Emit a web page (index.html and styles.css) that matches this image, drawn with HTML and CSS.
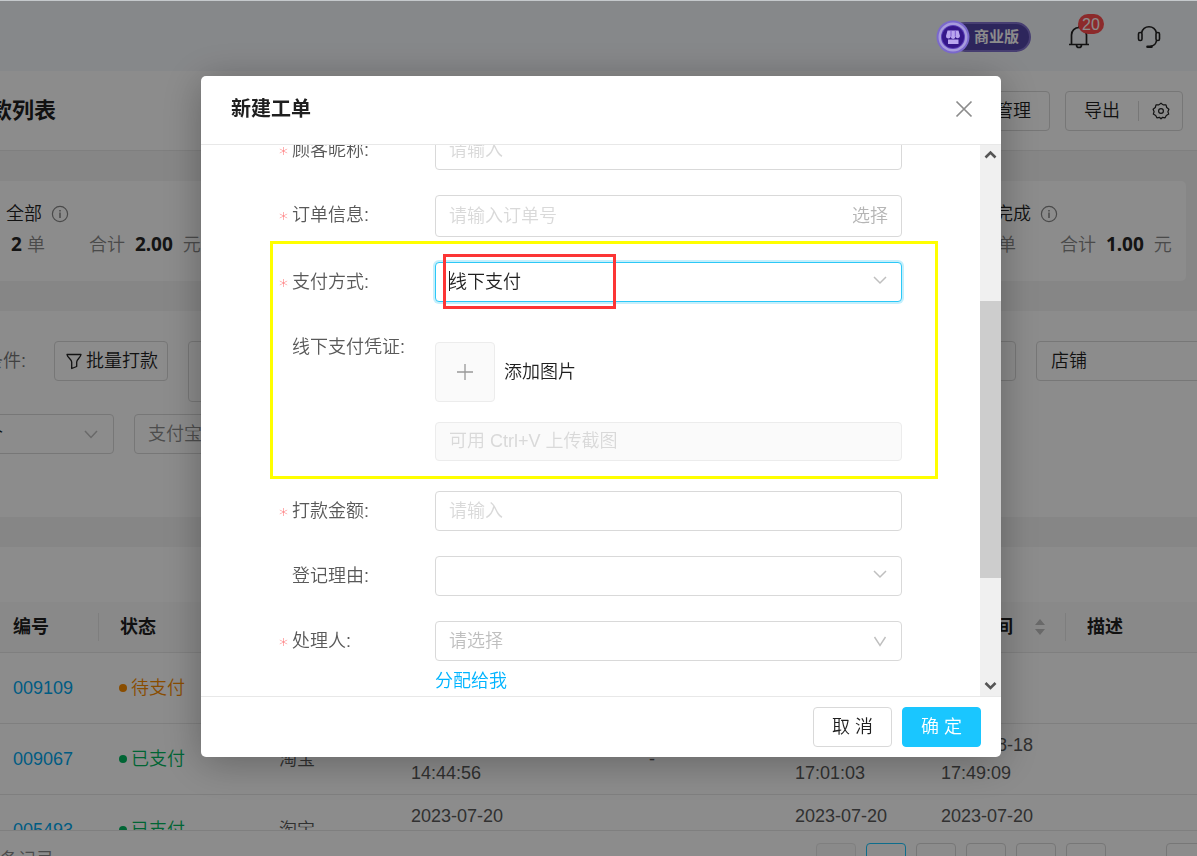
FILE: index.html
```html
<!DOCTYPE html>
<html lang="zh-CN">
<head>
<meta charset="utf-8">
<title>打款列表 - 新建工单</title>
<link rel="stylesheet" href="styles.css">
</head>
<body>
<div class="shell">
  <header class="topbar">
    <a class="edition" href="#">
      <svg class="edition-icon" width="34" height="36" viewBox="0 0 34 36" aria-hidden="true">
        <circle cx="17" cy="18" r="16.500" fill="#7a68cc"/>
        <circle cx="17" cy="18" r="14.500" fill="#a79cdc"/>
        <circle cx="17" cy="18" r="12" fill="#5a3fb8"/>
        <circle cx="17" cy="18" r="11" fill="#35178a"/>
        <path d="M11.500 11.500h11l1.500 5.500a2.300 2.300 0 0 1-4.500 0.500 2.300 2.300 0 0 1-4.800 0 2.300 2.300 0 0 1-4.700-.5z" fill="#b9a6ee"/>
        <path d="M12 20.500h10.500v4.500h-10.500z" fill="#b9a6ee"/>
        <path d="M15 11.500v6M19.300 11.500v6" stroke="#7c5ad0" stroke-width="1"/>
      </svg>
      <span class="edition-text">商业版</span>
    </a>
    <button class="icon-btn bell" aria-label="通知">
      <svg width="24" height="26" viewBox="0 0 24 26" fill="none" stroke="#222" stroke-width="1.700">
        <path d="M2 20.500h20M4.500 20.500V11a7.500 7.500 0 0 1 15 0v9.500M12 3.500V1.500M9.500 21a2.500 2.500 0 0 0 5 0"/>
      </svg>
      <span class="badge">20</span>
    </button>
    <button class="icon-btn" aria-label="客服">
      <svg width="24" height="24" viewBox="0 0 24 24" fill="none" stroke="#222" stroke-width="1.600">
        <path d="M4.500 8C5.500 4 8.500 1.800 12 1.800S18.500 4 19.500 8M19.500 15.500c-.5 3.500-3 5.500-6 5.700"/>
        <rect x="1.500" y="7.500" width="3.500" height="8" rx="1.500"/>
        <rect x="19" y="7.500" width="3.500" height="8" rx="1.500"/>
        <path d="M10.500 21.800h4" stroke-width="2.600" stroke-linecap="round"/>
      </svg>
    </button>
  </header>

  <div class="page-head">
    <h1 class="page-title">款列表</h1>
    <div class="page-actions">
      <button class="btn">工单管理</button>
      <div class="btn-group">
        <button class="btn-plain">导出</button>
        <button class="btn-gear" aria-label="设置">
          <svg width="18" height="18" viewBox="0 0 18 18" fill="none" stroke="#222" stroke-width="1.200">
            <path d="M9 1.200l2.200 1.700 2.800-.1.700 2.700 2.200 1.700L15.900 9.800l.8 2.300-2.400 1.400-1.200 2.300-2.500-.5L9 16.800l-1.600-1.500-2.500.5-1.200-2.300-2.400-1.400.8-2.300-1-2.600 2.200-1.700.7-2.700 2.800.1z" stroke-linejoin="round"/>
            <circle cx="9" cy="9" r="2.400"/>
          </svg>
        </button>
      </div>
    </div>
  </div>

  <section class="stats">
    <div class="stat">
      <div class="stat-title">全部
        <svg width="18" height="18" viewBox="0 0 18 18" fill="none" stroke="#888" stroke-width="1.200"><circle cx="9" cy="9" r="7.600"/><path d="M9 7.500V13M9 5v1.500" stroke-width="1.500"/></svg>
      </div>
      <div class="stat-line"><span class="count"><b>2</b> 单</span><span class="sum">合计 <b>2.00</b> 元</span></div>
    </div>
    <div class="stat">
      <div class="stat-title">已完成
        <svg width="18" height="18" viewBox="0 0 18 18" fill="none" stroke="#888" stroke-width="1.200"><circle cx="9" cy="9" r="7.600"/><path d="M9 7.500V13M9 5v1.500" stroke-width="1.500"/></svg>
      </div>
      <div class="stat-line"><span class="count"><b>1</b> 单</span><span class="sum">合计 <b>1.00</b> 元</span></div>
    </div>
  </section>

  <section class="filters">
    <div class="filter-row">
      <span class="filter-label">条件:</span>
      <button class="btn btn-filter">
        <svg width="16" height="17" viewBox="0 0 16 17" fill="none" stroke="#222" stroke-width="1.300" stroke-linejoin="round"><path d="M1 1.500h14c-.2 3-4.300 4.500-4.300 7.500v4.500L5.700 15.500V9C5.700 6 1.200 4.500 1 1.500z"/></svg>
        批量打款
      </button>
      <div class="box box-tall"></div>
      <div class="box"></div>
      <div class="box box-shop">店铺</div>
    </div>
    <div class="filter-row second">
      <div class="box box-left">
        <span class="cut-text">个</span>
        <svg width="14" height="9" viewBox="0 0 14 9" fill="none" stroke="#bfbfbf" stroke-width="1.500"><path d="M1 1l6 6.500L13 1"/></svg>
      </div>
      <input class="box box-alipay" placeholder="支付宝" aria-label="支付宝">
    </div>
  </section>

  <section class="table-area">
    <table class="orders">
      <colgroup><col class="c-id"><col class="c-state"><col class="c-shop"><col class="c-date"><col class="c-short"><col class="c-date"><col class="c-date"><col class="c-date"><col></colgroup>
      <thead>
        <tr><th>编号</th><th>状态</th><th></th><th></th><th></th><th></th><th></th>
          <th><span class="sort-head">打款时间
            <svg width="12" height="18" viewBox="0 0 12 18" fill="#bfbfbf"><path d="M6 1l5 6H1zM6 17l5-6H1z"/></svg></span></th>
          <th>描述</th></tr>
      </thead>
      <tbody>
        <tr><td><a href="#">009109</a></td><td><span class="state wait">待支付</span></td><td></td><td></td><td></td><td></td><td></td><td></td><td></td></tr>
        <tr><td><a href="#">009067</a></td><td><span class="state paid">已支付</span></td><td>淘宝</td><td>2023-08-18 14:44:56</td><td></td><td>-</td><td>2023-08-18 17:01:03</td><td>2023-08-18 17:49:09</td><td></td></tr>
        <tr><td><a href="#">005493</a></td><td><span class="state paid">已支付</span></td><td>淘宝</td><td>2023-07-20</td><td></td><td></td><td>2023-07-20</td><td>2023-07-20</td><td></td></tr>
      </tbody>
    </table>
  </section>

  <footer class="pager">
    <span class="total">条记录</span>
    <nav class="pages" aria-label="分页">
      <button class="page off" disabled>‹</button>
      <button class="page on">1</button>
      <button class="page">2</button>
      <button class="page">3</button>
      <button class="page">4</button>
      <button class="page">5</button>
      <span class="dots">•••</span>
      <button class="page">9</button>
    </nav>
  </footer>
</div>

<div class="mask">
  <div class="modal" role="dialog" aria-labelledby="dlg-title">
    <div class="modal-head">
      <h2 class="modal-title" id="dlg-title">新建工单</h2>
      <button class="close" aria-label="关闭">
        <svg width="18" height="18" viewBox="0 0 18 18" fill="none" stroke="#8c8c8c" stroke-width="1.700"><path d="M1.500 1.500l15 15M16.500 1.500l-15 15"/></svg>
      </button>
    </div>

    <div class="modal-body">
      <form class="form">
        <div class="field">
          <label class="label required" for="f-nick">顾客昵称</label>
          <div class="control"><input id="f-nick" class="input" placeholder="请输入"></div>
        </div>
        <div class="field">
          <label class="label required" for="f-order">订单信息</label>
          <div class="control order"><input id="f-order" class="order-input" placeholder="请输入订单号"><button type="button" class="pick">选择</button></div>
        </div>

        <div class="group">
          <div class="field">
            <label class="label required" for="f-pay">支付方式</label>
            <div class="control">
              <select id="f-pay" class="input focused"><option>线下支付</option></select>
              <svg class="arrow" width="14" height="9" viewBox="0 0 14 9" fill="none" stroke="#bfbfbf" stroke-width="1.500"><path d="M1 1l6 6L13 1"/></svg>
              <span class="caret"></span>
              <span class="mark-red"></span>
            </div>
          </div>
          <div class="field">
            <label class="label" for="f-paste">线下支付凭证</label>
            <div class="control voucher">
              <div class="upload">
                <button type="button" class="upload-btn" id="f-upload" aria-label="添加图片">
                  <svg width="16" height="16" viewBox="0 0 16 16" stroke="#999" stroke-width="1.300"><path d="M8 0v16M0 8h16"/></svg>
                </button>
                <label for="f-upload">添加图片</label>
              </div>
              <input id="f-paste" class="input disabled" placeholder="可用 Ctrl+V 上传截图" disabled>
            </div>
          </div>
          <span class="mark-yellow"></span>
        </div>

        <div class="field">
          <label class="label required" for="f-amount">打款金额</label>
          <div class="control"><input id="f-amount" class="input" placeholder="请输入"></div>
        </div>
        <div class="field">
          <label class="label" for="f-reason">登记理由</label>
          <div class="control">
            <select id="f-reason" class="input"><option></option></select>
            <svg class="arrow" width="14" height="9" viewBox="0 0 14 9" fill="none" stroke="#bfbfbf" stroke-width="1.500"><path d="M1 1l6 6L13 1"/></svg>
          </div>
        </div>
        <div class="field">
          <label class="label required" for="f-owner">处理人</label>
          <div class="control">
            <select id="f-owner" class="input hint"><option>请选择</option></select>
            <svg class="arrow" width="14" height="12" viewBox="0 0 14 12" fill="none" stroke="#bfbfbf" stroke-width="1.400"><path d="M1.500 2L7 10.500 12.500 2"/></svg>
            <a class="assign" href="#">分配给我</a>
          </div>
        </div>
      </form>
      <div class="scrollbar" aria-hidden="true">
        <svg width="21" height="21" viewBox="0 0 21 21" fill="none" stroke="#555" stroke-width="2.600"><path d="M5.500 12.500l5-5 5 5"/></svg>
        <div class="track"><div class="thumb"></div></div>
        <svg width="21" height="21" viewBox="0 0 21 21" fill="none" stroke="#555" stroke-width="2.600"><path d="M5.500 8l5 5 5-5"/></svg>
      </div>
    </div>

    <div class="modal-foot">
      <button class="btn">取 消</button>
      <button class="btn primary">确 定</button>
    </div>
  </div>
</div>
</body>
</html>
```

FILE: styles.css
```css
* { box-sizing: border-box; }

body {
  margin: 0;
  height: 100vh;
  overflow: hidden;
  background: #fff;
  color: #1f1f1f;
  font: 18px/28px "Liberation Sans", "Noto Sans CJK SC", sans-serif;
  font-weight: 350;
}

button, input, select {
  font: inherit;
  color: inherit;
}

button {
  padding: 0;
  border: 0;
  background: none;
}

a { color: #00b4ff; text-decoration: none; }
h1, h2 { margin: 0; }
svg { flex: none; display: block; }

/* Page behind the dialog */
.shell {
  display: flex;
  flex-direction: column;
  height: calc(100vh + 40px);
}

.topbar {
  flex: none;
  display: flex;
  align-items: center;
  justify-content: flex-end;
  gap: 36px;
  height: 71px;
  padding: 1px 36px 0 0;
  border-top: 1px solid #c5c9cc;
  background: #f5f8fb;
}

.edition {
  display: flex;
  align-items: center;
  color: #fff;
}

.edition-icon { z-index: 1; }

.edition-text {
  height: 30px;
  margin-left: -20px;
  padding: 0 10px 0 22px;
  border: 2px solid #8172cf;
  border-radius: 15px;
  background: #5345a8;
  font-size: 15px;
  line-height: 26px;
  font-weight: 700;
}

.icon-btn { position: relative; }
.bell { margin-right: 10px; }

.badge {
  position: absolute;
  left: 11px;
  top: -10px;
  width: 26px;
  height: 20px;
  border-radius: 10px;
  background: #ff4d4f;
  color: #fff;
  font-size: 16px;
  line-height: 21px;
}

.page-head {
  flex: none;
  display: flex;
  align-items: center;
  justify-content: space-between;
  height: 80px;
  padding-right: 14px;
  border-bottom: 1px solid #e8e8e8;
}

.page-title {
  margin-left: -10px;
  font-size: 22px;
  font-weight: 700;
}

.page-actions { display: flex; gap: 15px; }

.btn {
  height: 40px;
  padding: 0 18px;
  border: 1px solid #d9d9d9;
  border-radius: 4px;
  background: #fff;
}

.btn-group {
  display: flex;
  align-items: center;
  height: 40px;
  border: 1px solid #d9d9d9;
  border-radius: 4px;
}

.btn-plain { padding: 0 18px; }

.btn-gear {
  height: 20px;
  padding: 0 12px 0 13px;
  border-left: 1px solid #d9d9d9;
}

.stats {
  flex: none;
  display: flex;
  justify-content: space-between;
  padding: 30px 11px 30px 0;
  background: #f5f5f5;
}

.stat {
  width: 229px;
  height: 100px;
  padding: 18px 0 0 20px;
  border-radius: 5px;
  background: #fff;
  white-space: nowrap;
}

.stat:first-child { margin-left: -14px; }

.stat-title {
  display: flex;
  align-items: center;
  gap: 9px;
  height: 30px;
}

.stat-line {
  display: flex;
  gap: 44px;
  padding-left: 5px;
  height: 30px;
  line-height: 30px;
  color: #888;
}

.stat-line b {
  color: #262626;
  font: 700 19px/30px "Noto Sans", sans-serif;
}

.sum b { margin: 0 5px; }

.filters {
  flex: none;
  height: 236px;
  padding-top: 30px;
  border-bottom: 30px solid #f5f5f5;
  overflow: hidden;
}

.filter-row {
  display: flex;
  align-items: flex-start;
  gap: 20px;
  height: 60px;
}

.filter-row.second { margin-top: 13px; height: 40px; }

.filter-label {
  width: 34px;
  display: flex;
  justify-content: flex-end;
  padding-right: 8px;
  line-height: 40px;
  white-space: nowrap;
  color: #777;
}

.btn-filter {
  display: flex;
  align-items: center;
  gap: 4px;
  padding: 0 9px 0 11px;
  white-space: nowrap;
}

.box {
  flex: 1;
  height: 40px;
  border: 1px solid #d9d9d9;
  border-radius: 4px;
  background: #fff;
  line-height: 38px;
}

.box-tall { height: 61px; }
.box-shop { flex: 0 0 176px; margin-right: -15px; padding-left: 14px; }

.box-left {
  flex: 0 0 120px;
  display: flex;
  align-items: center;
  justify-content: space-between;
  margin-left: -6px;
  padding-right: 15px;
}

.cut-text { margin-left: -10px; }
.box-alipay { flex: 0 0 300px; padding: 0 13px; }

.table-area {
  flex: 1;
  min-height: 0;
  padding-top: 55px;
  overflow: hidden;
}

.orders {
  width: 100%;
  table-layout: fixed;
  border-collapse: separate;
  border-spacing: 0;
}

.c-id { width: 99px; }
.c-state { width: 159px; }
.c-shop { width: 132px; }
.c-date { width: 146px; }
.c-short { width: 92px; }

.orders th, .orders td {
  padding: 7px 20px 7px 21px;
  border-bottom: 1px solid #e8e8e8;
  text-align: left;
  color: #595959;
}

.orders th:first-child, .orders td:first-child { padding-left: 13px; }

.orders th {
  height: 51px;
  background: linear-gradient(#e5e5e5, #e5e5e5) right center / 1px 28px no-repeat #fafafa;
  color: #1f1f1f;
  font-weight: 700;
}

.orders th:last-child { background: #fafafa; }
.orders td { height: 71px; }
.orders tr:last-child td:nth-child(n+4) { padding-bottom: 35px; }
.orders td a { color: #00a8ee; }

.sort-head {
  display: flex;
  align-items: center;
  justify-content: space-between;
  white-space: nowrap;
}

.state {
  display: flex;
  align-items: center;
  gap: 4px;
  margin-left: -1px;
}

.state::before {
  content: "";
  width: 8px;
  height: 8px;
  border-radius: 50%;
  background: currentColor;
}

.wait { color: #fa8c00; }
.paid { color: #00b860; }

.pager {
  flex: none;
  display: flex;
  justify-content: space-between;
  height: 66px;
  padding-top: 12px;
  border-top: 1px solid #e8e8e8;
  background: #fff;
}

.total { color: #888; line-height: 34px; }

.pages {
  display: flex;
  gap: 10px;
  margin-right: -9px;
}

.page, .dots { width: 40px; height: 40px; text-align: center; }

.page {
  border: 1px solid #d9d9d9;
  border-radius: 4px;
  background: #fff;
}

.page.on { border-color: #1ac6ff; color: #1ac6ff; }
.page.off { border-color: #e8e8e8; background: #fcfcfc; color: #ccc; }
.dots { color: #ccc; line-height: 40px; }

/* Dialog */
.mask {
  position: fixed;
  inset: 1px 0 0;
  padding: 75px 0 0 5px;
  background: rgba(0, 0, 0, 0.45);
}

.modal {
  width: 800px;
  max-width: 100%;
  margin: 0 auto;
  border-radius: 5px;
  background: #fff;
  box-shadow: 0 5px 40px rgba(0, 0, 0, 0.3);
}

.modal-head {
  display: flex;
  align-items: center;
  justify-content: space-between;
  padding: 19px 28px 21px 30px;
  border-bottom: 1px solid #e8e8e8;
}

.modal-title {
  font-size: 20px;
  line-height: 28px;
  font-weight: 700;
}

.modal-body {
  display: flex;
  height: 551px;
  overflow: hidden;
}

.form {
  flex: 1;
  display: flex;
  flex-direction: column;
  gap: 25px;
  margin-top: -15px;
  padding: 0 78px;
}

.field {
  display: grid;
  grid-template-columns: 156px 1fr;
}

.label {
  display: flex;
  height: 40px;
  padding-left: 13px;
  line-height: 40px;
  color: #595959;
  white-space: nowrap;
}

.label::after { content: ":"; }

.required { padding-left: 0; }

.required::before {
  content: "*";
  width: 13px;
  color: #ff4d4f;
  font-family: "DejaVu Sans", sans-serif;
  line-height: 48px;
}

.control { position: relative; }

.input {
  display: block;
  width: 100%;
  height: 40px;
  padding: 0 13px;
  border: 1px solid #d9d9d9;
  border-radius: 4px;
  background: #fff;
  appearance: none;
  outline: 0;
}

::placeholder { color: #d9d9d9; opacity: 1; }
.box-alipay::placeholder { color: #8c8c8c; }

.focused {
  border-color: #2cc8f7;
  box-shadow: 0 0 0 2px #c5effc;
}

.disabled { border-color: #ececec; background: #fafafa; }
.hint { color: #bfbfbf; }

.order {
  display: flex;
  height: 42px;
  padding: 0 13px;
  border: 1px solid #d9d9d9;
  border-radius: 4px;
}

.order-input {
  flex: 1;
  min-width: 0;
  padding: 0;
  border: 0;
  outline: 0;
}

.pick { color: #b5b5b5; }

.arrow {
  position: absolute;
  right: 15px;
  top: 14px;
  pointer-events: none;
}

.caret {
  position: absolute;
  left: 14px;
  top: 9px;
  width: 1px;
  height: 20px;
  background: #222;
}

.group {
  position: relative;
  display: flex;
  flex-direction: column;
  gap: 25px;
  padding-bottom: 5px;
}

.mark-red, .mark-yellow {
  position: absolute;
  pointer-events: none;
}

.mark-red {
  left: 8px;
  top: -8px;
  width: 173px;
  height: 55px;
  border: 3px solid #fc3535;
}

.mark-yellow {
  inset: -21px -36px -13px -9px;
  border: 3px solid #ff0;
}

.voucher {
  display: flex;
  flex-direction: column;
  gap: 20px;
  padding-top: 15px;
}

.voucher .input { height: 39px; }

.upload {
  display: flex;
  align-items: center;
  gap: 9px;
}

.upload-btn {
  display: grid;
  place-items: center;
  width: 60px;
  height: 60px;
  border: 1px solid #ececec;
  border-radius: 4px;
  background: #fafafa;
}

.assign { display: block; padding-top: 6px; }

.scrollbar {
  display: flex;
  flex-direction: column;
  width: 21px;
  background: #f0f0f0;
}

.track { flex: 1; padding-top: 135px; }
.thumb { height: 277px; background: #cdcdcd; }

.modal-foot {
  display: flex;
  justify-content: flex-end;
  gap: 10px;
  padding: 10px 20px;
  border-top: 1px solid #e8e8e8;
}

.primary {
  border-color: #1ac6ff;
  background: #1ac6ff;
  color: #fff;
}
```
